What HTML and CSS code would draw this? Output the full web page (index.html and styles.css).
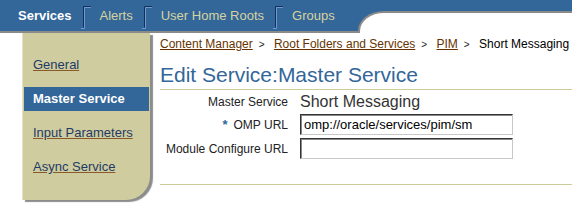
FILE: index.html
```html
<!DOCTYPE html>
<html lang="en">
<head>
  <meta charset="utf-8" />
  <title>Edit Service</title>
  <link rel="stylesheet" href="styles.css">
</head>
<body>
  <div class="header">
    <div class="tabs">
      <span class="tab active">Services</span>
      <svg class="sep" width="12" height="26" viewBox="0 0 12 26">
        <path d="M1 24.5 H4.5 V3.5 H11" fill="none" stroke="#6b9bd2" stroke-width="1"/>
        <path d="M3.5 23.5 V2.5 H11" fill="none" stroke="#14305a" stroke-width="1"/>
      </svg>
      <span class="tab">Alerts</span>
      <svg class="sep" width="12" height="26" viewBox="0 0 12 26">
        <path d="M1 24.5 H4.5 V3.5 H11" fill="none" stroke="#6b9bd2" stroke-width="1"/>
        <path d="M3.5 23.5 V2.5 H11" fill="none" stroke="#14305a" stroke-width="1"/>
      </svg>
      <span class="tab">User Home Roots</span>
      <svg class="sep" width="12" height="26" viewBox="0 0 12 26">
        <path d="M1 24.5 H4.5 V3.5 H11" fill="none" stroke="#6b9bd2" stroke-width="1"/>
        <path d="M3.5 23.5 V2.5 H11" fill="none" stroke="#14305a" stroke-width="1"/>
      </svg>
      <span class="tab">Groups</span>
    </div>
    <div class="cap"><div class="cap-inner"></div></div>
  </div>

  <div class="main">
    <div class="sidebar">
      <a class="item" href="#">General</a>
      <span class="item selected">Master Service</span>
      <a class="item" href="#">Input Parameters</a>
      <a class="item" href="#">Async Service</a>
    </div>

    <div class="content">
      <div class="crumbs">
        <a href="#">Content Manager</a><span class="gt">&gt;</span>
        <a href="#">Root Folders and Services</a><span class="gt">&gt;</span>
        <a href="#">PIM</a><span class="gt">&gt;</span>
        <span class="current">Short Messaging</span>
      </div>
      <h1>Edit Service:Master Service</h1>

      <div class="form">
        <label class="lbl">Master Service</label>
        <span class="value">Short Messaging</span>

        <label class="lbl"><span class="req">*</span>OMP URL</label>
        <input class="field" type="text" value="omp://oracle/services/pim/sm">

        <label class="lbl">Module Configure URL</label>
        <input class="field" type="text" value="">
      </div>

      <div class="rule"></div>
    </div>
  </div>
</body>
</html>
```

FILE: styles.css
```css
/* base */
body {
  margin: 0;
  background: #fff;
  font-family: "Liberation Sans", Arial, sans-serif;
  font-size: 12px;
  color: #000;
  width: 572px; height: 204px;
  overflow: hidden;
}
a { color: #663300; }

/* top tab bar */
.header { display: flex; height: 33px; }
.tabs {
  width: 340px; height: 31px;
  background: #336699;
  border-bottom: 2px solid #8a8a8a;
  display: flex; align-items: center;
  padding-left: 18px;
}
.tab { font-size: 13px; color: #d6d3a0; white-space: nowrap; }
.tab.active { color: #fff; font-weight: bold; }
.sep { margin: 2px 8px 0 8px; flex: none; }

.cap { flex: 1; background: #336699; height: 33px; }
.cap-inner {
  margin-top: 11px; height: 20px;
  background: #fff;
  border-top: 2px solid #8a8a8a;
  border-left: 2px solid #8a8a8a;
  border-top-left-radius: 26px 20px;
}

/* layout */
.main { display: flex; }

/* side nav */
.sidebar {
  margin-left: 22px;
  width: 127px; height: 147px;
  background: #cfcd9f;
  border-left: 1px solid #e4e2c2;
  border-bottom-right-radius: 24px;
  box-shadow: 3px 2px 1px #8c8c8c;
  padding-top: 20px;
  display: flex; flex-direction: column; gap: 10px;
  flex: none;
}
.sidebar .item {
  height: 24px; line-height: 24px;
  margin: 0 1px 0 1px;
  padding-left: 9px;
  font-size: 13px;
  color: #1f3a66;
  text-decoration-color: #8a5a2b;
  white-space: nowrap;
}
.sidebar .item.selected {
  background: #336699; color: #fff; font-weight: bold;
}

/* content */
.content { flex: 1; padding-left: 10px; }
.crumbs { margin-top: 4px; height: 14px; line-height: 14px; white-space: nowrap; }
.crumbs .gt { font-size: 10px; margin: 0 6px; color: #222; }
.crumbs .current { color: #000; }

h1 {
  margin: 12px 0 0;
  font-size: 21px; font-weight: normal;
  color: #336699;
  line-height: 24px;
  border-bottom: 1px solid #cccc99;
  padding-bottom: 2px;
}

.form {
  display: grid;
  grid-template-columns: 128px 213px;
  column-gap: 12px;
  row-gap: 3px;
  margin-top: 2px;
  align-items: center;
}
.lbl { text-align: right; color: #222; white-space: nowrap; }
.req { color: #336699; font-weight: bold; margin-right: 6px; font-size: 13px; }
.value { font-size: 16px; color: #333; height: 19px; line-height: 19px; }
.field {
  box-sizing: border-box;
  width: 213px; height: 21px;
  margin: 0; padding: 1px 3px;
  font-family: "Liberation Sans", Arial, sans-serif;
  font-size: 13px; color: #000;
  border: 1px solid;
  border-color: #333 #c8c8c8 #c8c8c8 #333;
  box-shadow: inset 1px 1px 0 #888;
  background: #fff;
}

.rule { margin-top: 25px; border-top: 1px solid #cccc99; }
```
